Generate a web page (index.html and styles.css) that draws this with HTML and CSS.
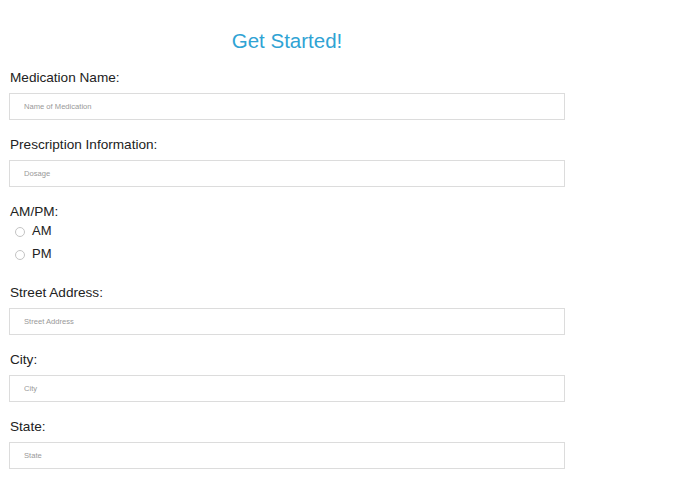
FILE: index.html
```html
<!DOCTYPE html>
<html lang="en">
<head>
    <meta charset="UTF-8">
    <meta name="viewport" content="width=device-width, initial-scale=1.0">
    <title>Get Started</title>
    <link rel="stylesheet" href="styles.css">
</head>
<body>
    <div class="container">
        <h1>Get Started!</h1>
        <form id="medForm">
            <div class="form-group">
                <label for="medName">Medication Name:</label>
                <input type="text" id="medName" placeholder="Name of Medication">
            </div>
            <div class="form-group">
                <label for="dosage">Prescription Information:</label>
                <input type="text" id="dosage" placeholder="Dosage">
            </div>
            <div class="form-group radio-group">
                <label>AM/PM:</label>
                <div class="radio-row">
                    <input type="radio" id="am" name="time" value="AM">
                    <span>AM</span>
                </div>
                <div class="radio-row">
                    <input type="radio" id="pm" name="time" value="PM">
                    <span>PM</span>
                </div>
            </div>
            <div class="form-group">
                <label for="street">Street Address:</label>
                <input type="text" id="street" placeholder="Street Address">
            </div>
            <div class="form-group">
                <label for="city">City:</label>
                <input type="text" id="city" placeholder="City">
            </div>
            <div class="form-group">
                <label for="state">State:</label>
                <input type="text" id="state" placeholder="State">
            </div>
        </form>
    </div>
</body>
</html>
```

FILE: styles.css
```css
body {
    font-family: "Liberation Sans", Arial, sans-serif;
    margin: 0;
    padding: 0;
    background-color: #fff;
    color: #222;
}
.container {
    width: 556px;
    margin-left: 9px;
    padding-top: 27px;
}
.container h1 {
    text-align: center;
    font-size: 20.5px;
    font-weight: normal;
    line-height: 28px;
    margin: 0 0 14px;
    color: #2fa3d4;
}
.form-group {
    margin-bottom: 16px;
}
.form-group label {
    display: block;
    font-size: 13.6px;
    line-height: 17px;
    margin: 0 0 7px 1px;
}
.form-group input[type="text"] {
    display: block;
    width: 100%;
    height: 27px;
    box-sizing: border-box;
    margin: 0;
    padding: 0 14px;
    font-family: inherit;
    font-size: 7.6px;
    color: #333;
    background: #fff;
    border: 1px solid #dcdcdc;
    border-radius: 0;
    outline: none;
}
.form-group input::placeholder {
    color: #999;
}
.radio-group {
    padding-bottom: 3px;
}
.radio-group label {
    margin-bottom: -1px;
}
.radio-row {
    display: flex;
    align-items: center;
    height: 23px;
    font-size: 13px;
}
.radio-row input {
    appearance: none;
    width: 10px;
    height: 10px;
    margin: 2px 7px 0 6px;
    border: 1px solid #c4c4c4;
    border-radius: 50%;
    background: #fff;
}
.radio-row input:checked {
    background: radial-gradient(#555 35%, #fff 40%);
}
```
